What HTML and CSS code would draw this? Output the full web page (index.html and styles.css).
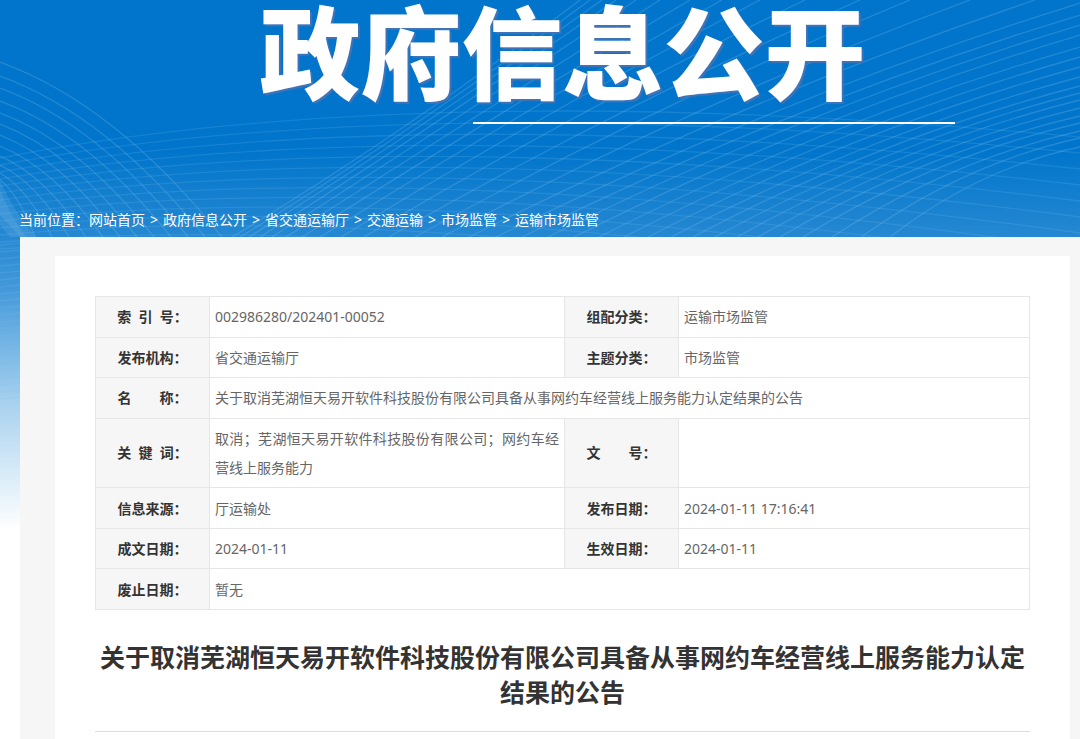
FILE: index.html
```html
<!DOCTYPE html>
<html lang="zh-CN">
<head>
  <meta charset="UTF-8" />
  <meta name="viewport" content="width=device-width, initial-scale=1.0"/>
  <title>政府信息公开</title>
  <link rel="stylesheet" href="styles.css">
</head>
<body>
  <div class="page">
    <svg class="waves" id="waves" viewBox="0 0 1080 530" preserveAspectRatio="none" aria-hidden="true">
      <path class="glow" d="M0 180 Q12 210 36 237 L20 237 L0 215 Z"/>
      <path class="glow" d="M0 190 Q10 215 26 237 L10 237 L0 225 Z"/>
    </svg>

    <header class="banner">
      <h1>政府信息公开</h1>
      <div class="banner-line"></div>
    </header>

    <nav class="crumbs">
      当前位置：<a href="#">网站首页</a><span>&gt;</span><a href="#">政府信息公开</a><span>&gt;</span><a href="#">省交通运输厅</a><span>&gt;</span><a href="#">交通运输</a><span>&gt;</span><a href="#">市场监管</a><span>&gt;</span><a href="#">运输市场监管</a>
    </nav>

    <main class="content">
      <article class="panel">
        <table class="info">
          <colgroup>
            <col class="col-label"><col><col class="col-label"><col class="col-value">
          </colgroup>
          <tr>
            <th scope="row">索&nbsp;&nbsp;引&nbsp;&nbsp;号：</th>
            <td>002986280/202401-00052</td>
            <th scope="row">组配分类：</th>
            <td>运输市场监管</td>
          </tr>
          <tr>
            <th scope="row">发布机构：</th>
            <td>省交通运输厅</td>
            <th scope="row">主题分类：</th>
            <td>市场监管</td>
          </tr>
          <tr>
            <th scope="row">名　　称：</th>
            <td colspan="3">关于取消芜湖恒天易开软件科技股份有限公司具备从事网约车经营线上服务能力认定结果的公告</td>
          </tr>
          <tr>
            <th scope="row">关&nbsp;&nbsp;键&nbsp;&nbsp;词：</th>
            <td class="keywords">取消；芜湖恒天易开软件科技股份有限公司；网约车经营线上服务能力</td>
            <th scope="row">文　　号：</th>
            <td></td>
          </tr>
          <tr>
            <th scope="row">信息来源：</th>
            <td>厅运输处</td>
            <th scope="row">发布日期：</th>
            <td>2024-01-11 17:16:41</td>
          </tr>
          <tr>
            <th scope="row">成文日期：</th>
            <td>2024-01-11</td>
            <th scope="row">生效日期：</th>
            <td>2024-01-11</td>
          </tr>
          <tr>
            <th scope="row">废止日期：</th>
            <td colspan="3">暂无</td>
          </tr>
        </table>

        <h2>关于取消芜湖恒天易开软件科技股份有限公司具备从事网约车经营线上服务能力认定结果的公告</h2>
      </article>
    </main>
  </div>

  <script src="waves.js"></script>
</body>
</html>
```
FILE: styles.css
```css
:root {
  --blue: #0075cb;
  --grey: #f6f6f6;
  --line: #e6e6e6;
  --text: #666;
  --dark: #333;
}

* {
  box-sizing: border-box;
}

body {
  margin: 0;
  background: #fff;
  color: var(--text);
  font-family: "Noto Sans", "Noto Sans CJK SC", sans-serif;
  font-size: 14px;
}

.page {
  position: relative;
  background: linear-gradient(var(--blue) 150px, #2688d2 237px, #4599da 290px, #a6d0ee 400px, #fff 530px);
}

/* Line pattern behind the banner */
.waves {
  position: absolute;
  top: 0;
  left: 0;
  width: 100%;
  height: 530px;
}

.waves path {
  fill: none;
  stroke: #7cc0ee;
  stroke-width: 1.3;
  opacity: 0.28;
}

.waves .faint {
  opacity: 0.18;
}

.waves .glow {
  fill: #9fd0f2;
  stroke: none;
  opacity: 0.15;
}

.banner,
.crumbs,
.content {
  position: relative;
}

.banner {
  height: 204px;
  padding-left: 45px;
  text-align: center;
}

.banner h1 {
  margin: 0;
  color: #fff;
  font-family: "Noto Sans CJK SC", sans-serif;
  font-size: 101px;
  font-weight: 900;
  line-height: 96px;
  text-shadow: 2px 2px 1px #4273b6;
}

.banner-line {
  width: 482px;
  height: 2px;
  margin: 26px 125px 0 auto;
  background: #fff;
}

.crumbs {
  height: 33px;
  padding-left: 19px;
  color: #fff;
  line-height: 32px;
  white-space: nowrap;
}

.crumbs a {
  color: #fff;
  text-decoration: none;
}

.crumbs span {
  margin: 0 5px;
}

.content {
  margin-left: 20px;
  padding: 19px 10px 0 35px;
  background: var(--grey);
}

.panel {
  padding: 40px;
  background: #fff;
}

.info {
  width: 100%;
  height: 314px;
  border-collapse: collapse;
  table-layout: fixed;
}

.col-label {
  width: 114px;
}

.col-value {
  width: 351px;
}

.info th,
.info td {
  padding: 5px;
  border: 1px solid var(--line);
  line-height: 29px;
}

.info th {
  background: var(--grey);
  color: var(--dark);
  font-weight: bold;
  text-align: center;
}

.info td {
  text-align: left;
}

.info .keywords {
  text-align: justify;
}

.panel h2 {
  margin: 30px 0 0;
  padding-bottom: 21px;
  border-bottom: 1px solid #ddd;
  color: var(--dark);
  font-size: 25px;
  font-weight: bold;
  line-height: 35px;
  text-align: center;
}
```
FILE: waves.js
```javascript
const waves = document.getElementById("waves");

function addLine(x0, y0, cx, cy, x1, y1, cls) {
  const path = document.createElementNS("http://www.w3.org/2000/svg", "path");
  path.setAttribute("d", `M${x0} ${y0} Q${cx} ${cy} ${x1} ${y1}`);
  if (cls) path.setAttribute("class", cls);
  waves.appendChild(path);
}

// rising lines, left to right
const ends = [
  [580, 0], [590, 0], [602, 0], [616, 0], [636, 0], [660, 0], [690, 0], [722, 0],
  [760, 0], [805, 0], [860, 0], [910, 0], [970, 0], [1035, 0],
  [1080, 3], [1080, 15], [1080, 25], [1080, 35], [1080, 47], [1080, 57], [1080, 67],
  [1080, 77], [1080, 86], [1080, 93], [1080, 100], [1080, 108], [1080, 116],
  [1080, 123], [1080, 131], [1080, 138], [1080, 147]
];
const starts = [
  232, 240, 249, 260, 272, 286, 302, 320, 341, 364, 389, 415, 442, 469, 496, 522,
  548, 574, 599, 624, 648, 671, 693, 715, 737, 758, 780, 803, 832, 861, 890
];
ends.forEach(([x, y], i) => {
  const bend = 18 - Math.min(i, 14) * 3;
  addLine(starts[i], 237, (starts[i] + x) / 2 - 6, (237 + y) / 2 + bend, x, y);
});

// arcs coming down from the left edge
const left = [62, 76, 88, 101, 113, 124, 135, 146, 156, 165, 173, 180];
left.forEach((y, i) => {
  const x = 222 - i * 17;
  addLine(0, y, x * 0.52, y + (237 - y) * 0.24, x, 237);
});

// nearly flat lines across the whole width
for (let i = 0; i < 14; i++) {
  addLine(0, 158 + i * 7, 420, 76 + i * 11, 1080, 137 + i * 16, "faint");
}

// ripples down the left edge
for (let y = 245; y < 400; y += 7) {
  addLine(0, y, 10, y - 1, 20, y - 2, "faint");
}
```
